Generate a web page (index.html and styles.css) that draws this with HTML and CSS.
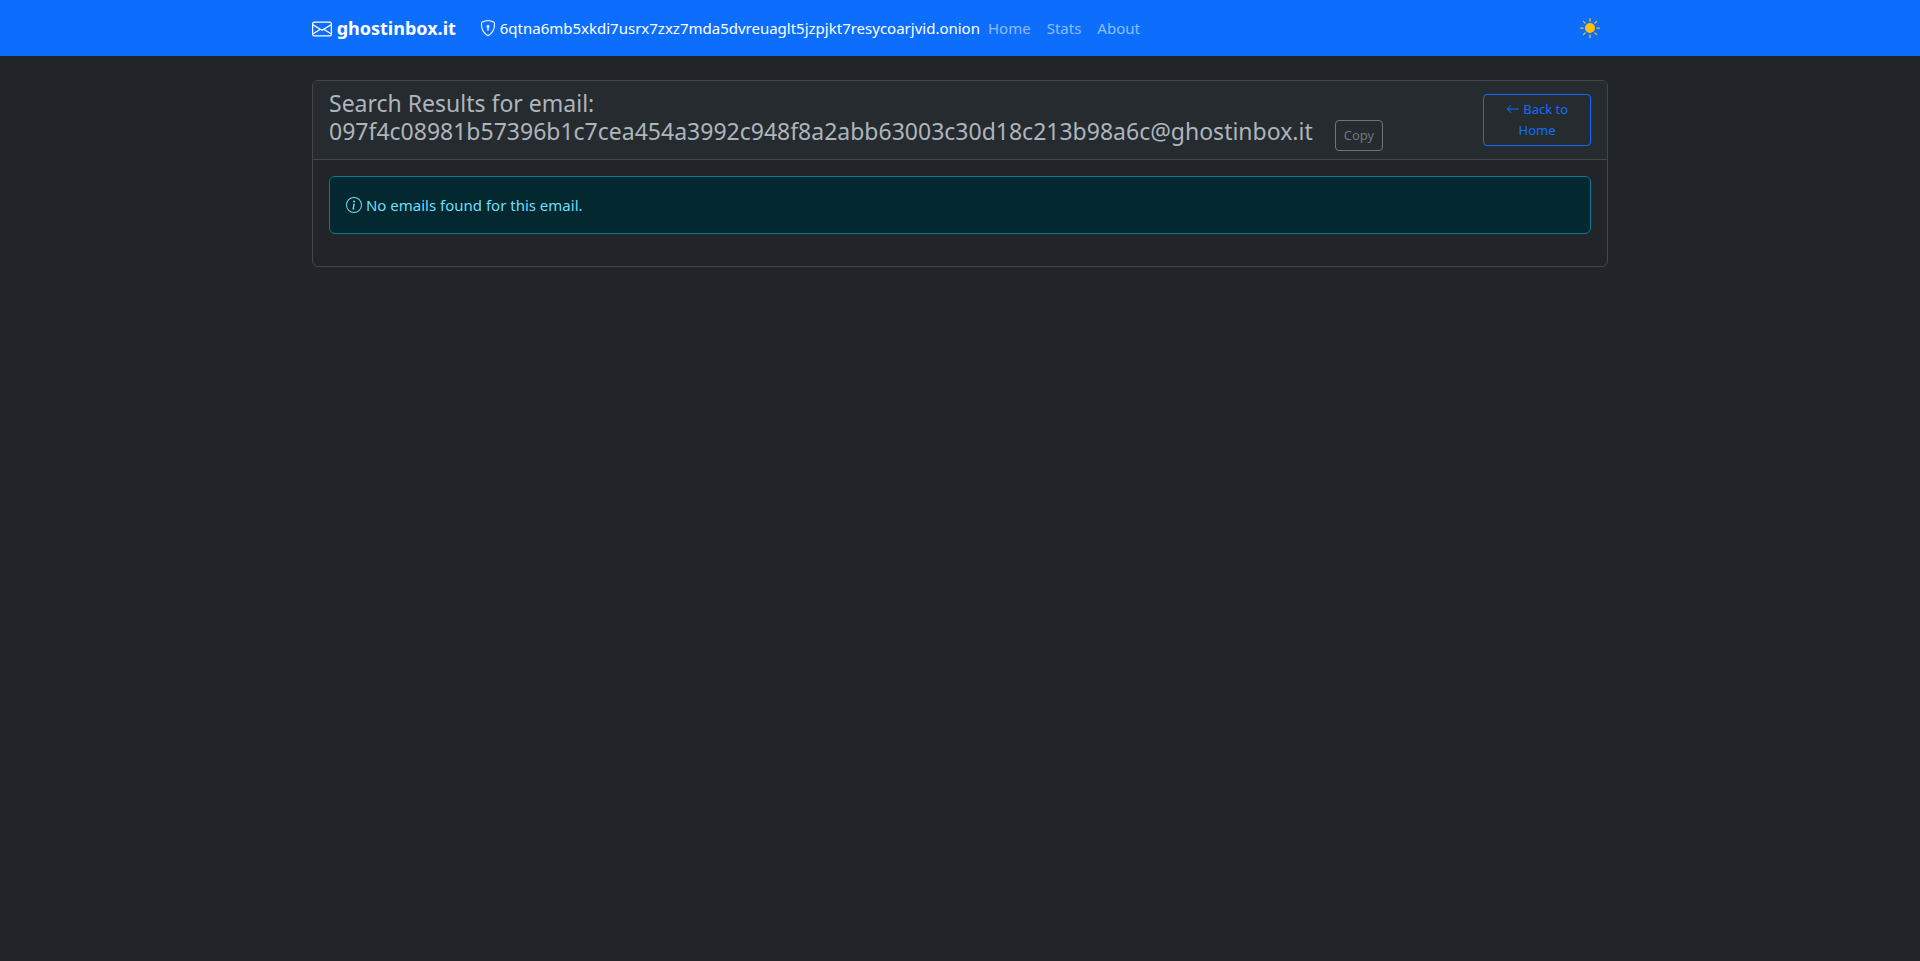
FILE: index.html
```html
<!DOCTYPE html>
<html lang="en">
<head>
    <meta charset="UTF-8">
    <meta name="viewport" content="width=device-width, initial-scale=1.0">
    <title>ghostinbox.it</title>
    <link rel="stylesheet" href="styles.css">
</head>
<body>
    <nav class="navbar">
        <div class="container navbar-inner">
            <a class="brand" href="#">
                <svg class="icon icon-lg" viewBox="0 0 16 16" fill="currentColor" aria-hidden="true"><path d="M0 4a2 2 0 0 1 2-2h12a2 2 0 0 1 2 2v8a2 2 0 0 1-2 2H2a2 2 0 0 1-2-2zm2-1a1 1 0 0 0-1 1v.217l7 4.2 7-4.2V4a1 1 0 0 0-1-1zm13 2.383-4.708 2.825L15 11.105zm-.034 6.876-5.64-3.471L8 9.583l-1.326-.795-5.64 3.47A1 1 0 0 0 2 13h12a1 1 0 0 0 .966-.741M1 11.105l4.708-2.897L1 5.383z"/></svg>
                ghostinbox.it
            </a>
            <ul class="nav-list">
                <li>
                    <a class="nav-link active" href="#">
                        <svg class="icon" viewBox="0 0 16 16" fill="currentColor" aria-hidden="true"><path d="M5.338 1.59a61 61 0 0 0-2.837.856.48.48 0 0 0-.328.39c-.554 4.157.726 7.19 2.253 9.188a10.7 10.7 0 0 0 2.287 2.233c.346.244.652.42.893.533q.18.085.293.118a1 1 0 0 0 .101.025 1 1 0 0 0 .1-.025q.114-.034.294-.118c.24-.113.547-.29.893-.533a10.7 10.7 0 0 0 2.287-2.233c1.527-1.997 2.807-5.031 2.253-9.188a.48.48 0 0 0-.328-.39c-.651-.213-1.75-.56-2.837-.855C9.552 1.29 8.531 1.067 8 1.067c-.53 0-1.552.223-2.662.524zM5.072.56C6.157.265 7.31 0 8 0s1.843.265 2.928.56c1.11.3 2.229.655 2.887.87a1.54 1.54 0 0 1 1.044 1.262c.596 4.477-.787 7.795-2.465 9.99a11.8 11.8 0 0 1-2.517 2.453 7 7 0 0 1-1.048.625c-.28.132-.581.24-.829.24s-.548-.108-.829-.24a7 7 0 0 1-1.048-.625 11.8 11.8 0 0 1-2.517-2.453C1.928 10.487.545 7.169 1.141 2.692A1.54 1.54 0 0 1 2.185 1.43 63 63 0 0 1 5.072.56"/><path d="M9.5 6.5a1.5 1.5 0 0 1-1 1.415l.385 1.99a.5.5 0 0 1-.491.595h-.788a.5.5 0 0 1-.49-.595l.384-1.99a1.5 1.5 0 1 1 2-1.415"/></svg>
                        6qtna6mb5xkdi7usrx7zxz7mda5dvreuaglt5jzpjkt7resycoarjvid.onion
                    </a>
                </li>
                <li><a class="nav-link" href="#">Home</a></li>
                <li><a class="nav-link" href="#">Stats</a></li>
                <li><a class="nav-link" href="#">About</a></li>
            </ul>
            <button class="theme-toggle" type="button" aria-label="Toggle theme">
                <svg class="icon icon-lg" viewBox="0 0 16 16" fill="currentColor" aria-hidden="true"><path d="M12 8a4 4 0 1 1-8 0 4 4 0 0 1 8 0M8 0a.5.5 0 0 1 .5.5v2a.5.5 0 0 1-1 0v-2A.5.5 0 0 1 8 0m0 13a.5.5 0 0 1 .5.5v2a.5.5 0 0 1-1 0v-2A.5.5 0 0 1 8 13m8-5a.5.5 0 0 1-.5.5h-2a.5.5 0 0 1 0-1h2a.5.5 0 0 1 .5.5M3 8a.5.5 0 0 1-.5.5h-2a.5.5 0 0 1 0-1h2A.5.5 0 0 1 3 8m10.657-5.657a.5.5 0 0 1 0 .707l-1.414 1.415a.5.5 0 1 1-.707-.708l1.414-1.414a.5.5 0 0 1 .707 0m-9.193 9.193a.5.5 0 0 1 0 .707L3.05 13.657a.5.5 0 0 1-.707-.707l1.414-1.414a.5.5 0 0 1 .707 0m9.193 2.121a.5.5 0 0 1-.707 0l-1.414-1.414a.5.5 0 0 1 .707-.707l1.414 1.414a.5.5 0 0 1 0 .707M4.464 4.465a.5.5 0 0 1-.707 0L2.343 3.05a.5.5 0 1 1 .707-.707l1.414 1.414a.5.5 0 0 1 0 .708"/></svg>
            </button>
        </div>
    </nav>

    <main class="container">
        <div class="card">
            <div class="card-header">
                <h4 class="card-title">
                    Search Results for email:
                    097f4c08981b57396b1c7cea454a3992c948f8a2abb63003c30d18c213b98a6c@ghostinbox.it
                    <button class="btn btn-secondary" type="button">Copy</button>
                </h4>
                <a class="btn btn-primary" href="#">
                    <svg class="icon icon-sm" viewBox="0 0 16 16" fill="currentColor" aria-hidden="true"><path fill-rule="evenodd" d="M15 8a.5.5 0 0 0-.5-.5H2.707l3.147-3.146a.5.5 0 1 0-.708-.708l-4 4a.5.5 0 0 0 0 .708l4 4a.5.5 0 0 0 .708-.708L2.707 8.5H14.5A.5.5 0 0 0 15 8"/></svg>
                    Back to Home
                </a>
            </div>
            <div class="card-body">
                <div class="alert" role="alert">
                    <svg class="icon" viewBox="0 0 16 16" fill="currentColor" aria-hidden="true"><path d="M8 15A7 7 0 1 1 8 1a7 7 0 0 1 0 14m0 1A8 8 0 1 0 8 0a8 8 0 0 0 0 16"/><path d="m8.930 6.588-2.290.287-.082.380.450.083c.294.070.352.176.288.469l-.738 3.468c-.194.897.105 1.319.808 1.319.545 0 1.178-.252 1.465-.598l.088-.416c-.2.176-.492.246-.686.246-.275 0-.375-.193-.304-.533zM9 4.500a1 1 0 1 1-2 0 1 1 0 0 1 2 0"/></svg>
                    No emails found for this email.
                </div>
            </div>
        </div>
    </main>
</body>
</html>
```
FILE: styles.css
```css
* {
    box-sizing: border-box;
}

body {
    margin: 0;
    font-family: "Noto Sans", sans-serif;
    font-size: 15px;
    line-height: 24px;
    color: #dee2e6;
    background-color: #212529;
}

a {
    text-decoration: none;
}

.container {
    width: 100%;
    max-width: 1320px;
    margin: 0 auto;
    padding: 0 12px;
}

.icon {
    display: inline-block;
    width: 16px;
    height: 16px;
    vertical-align: -2px;
}

.icon-lg {
    width: 20px;
    height: 20px;
    vertical-align: -4px;
}

.icon-sm {
    width: 14px;
    height: 14px;
}

/* Navbar */
.navbar {
    padding: 8px 0;
    background-color: #0d6efd;
}

.navbar-inner {
    display: flex;
    align-items: center;
}

.brand {
    margin-right: 16px;
    font-size: 18px;
    font-weight: 700;
    line-height: 30px;
    color: #fff;
    white-space: nowrap;
}

.nav-list {
    display: flex;
    flex: 1;
    margin: 0;
    padding: 0;
    list-style: none;
}

.nav-link {
    display: block;
    padding: 8px;
    color: rgba(255, 255, 255, 0.55);
}

.nav-link.active {
    padding-right: 0;
    color: #fff;
}

.theme-toggle {
    display: flex;
    padding: 8px;
    border: none;
    color: #ffc107;
    background: none;
    cursor: pointer;
}

/* Results card */
.card {
    margin-top: 24px;
    border: 1px solid #424649;
    border-radius: 6px;
}

.card-header {
    display: flex;
    justify-content: space-between;
    align-items: center;
    padding: 8px 16px;
    color: #adb5bd;
    background-color: #262b2f;
    border-bottom: 1px solid #424649;
    border-radius: 5px 5px 0 0;
}

.card-title {
    margin: 0;
    font-size: 23px;
    font-weight: 400;
    line-height: 28px;
}

.card-body {
    padding: 16px;
}

.btn {
    padding: 4px 8px;
    border: 1px solid;
    border-radius: 4px;
    font-family: inherit;
    font-size: 13px;
    line-height: 21px;
    text-align: center;
    background: none;
    cursor: pointer;
}

.btn-secondary {
    margin-left: 16px;
    color: #6c757d;
}

.btn-primary {
    flex: 0 0 108px;
    padding: 4px 16px;
    color: #0d6efd;
}

.alert {
    margin-bottom: 16px;
    padding: 16px;
    color: #6edff6;
    background-color: #032830;
    border: 1px solid #087990;
    border-radius: 6px;
}
```
